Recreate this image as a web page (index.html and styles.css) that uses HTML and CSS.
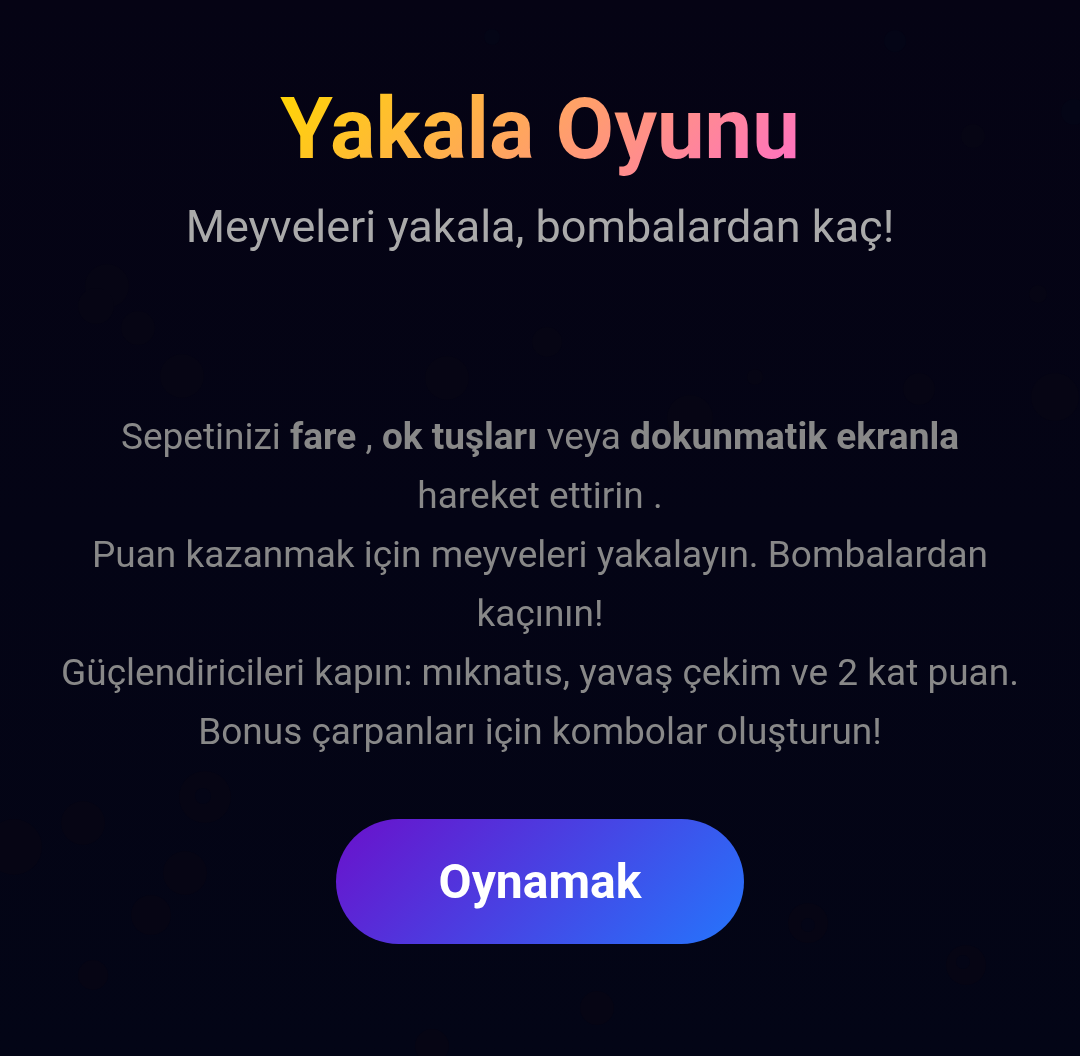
FILE: index.html
```html
<!DOCTYPE html>
<html lang="tr">
<head>
    <meta charset="UTF-8">
    <meta name="viewport" content="width=device-width, initial-scale=1.0">
    <title>Yakala Oyunu</title>
    <link rel="stylesheet" href="styles.css">
</head>
<body>
    <svg class="particles" viewBox="0 0 1080 1056" preserveAspectRatio="xMidYMid slice" aria-hidden="true">
        <g class="glow-dim">
            <circle cx="107" cy="286" r="22"/>
            <circle cx="96" cy="306" r="18"/>
            <circle cx="138" cy="328" r="17"/>
            <circle cx="182" cy="376" r="22"/>
            <circle cx="447" cy="378" r="22"/>
            <circle cx="547" cy="342" r="15"/>
            <circle cx="690" cy="418" r="23"/>
            <circle cx="755" cy="377" r="8"/>
            <circle cx="973" cy="136" r="12"/>
            <circle cx="919" cy="389" r="16"/>
            <circle cx="1055" cy="397" r="24"/>
            <circle cx="1038" cy="294" r="9"/>
        </g>
        <g class="glow-red">
            <circle cx="14" cy="847" r="28"/>
            <circle cx="83" cy="823" r="22"/>
            <circle cx="205" cy="797" r="26"/>
            <circle cx="185" cy="873" r="22"/>
            <circle cx="151" cy="915" r="20"/>
            <circle cx="93" cy="975" r="15"/>
            <circle cx="966" cy="965" r="20"/>
            <circle cx="808" cy="923" r="20"/>
            <circle cx="597" cy="1008" r="17"/>
            <circle cx="432" cy="1046" r="17"/>
        </g>
        <g class="glow-blue">
            <circle cx="203" cy="796" r="8"/>
            <circle cx="808" cy="925" r="7"/>
            <circle cx="963" cy="962" r="7"/>
            <circle cx="492" cy="37" r="8"/>
            <circle cx="895" cy="41" r="11"/>
            <circle cx="1074" cy="112" r="13"/>
        </g>
    </svg>
    <main class="start-screen">
        <h1 class="title">Yakala Oyunu</h1>
        <p class="subtitle">Meyveleri yakala, bombalardan kaç!</p>
        <p class="instructions">
            Sepetinizi <b>fare</b> , <b>ok tuşları</b> veya <b>dokunmatik ekranla</b> hareket ettirin .<br>
            Puan kazanmak için meyveleri yakalayın. Bombalardan kaçının!<br>
            Güçlendiricileri kapın: mıknatıs, yavaş çekim ve 2 kat puan.<br>
            Bonus çarpanları için kombolar oluşturun!
        </p>
        <button class="play-button" type="button">Oynamak</button>
    </main>
</body>
</html>
```
FILE: styles.css
```css
* {
    box-sizing: border-box;
}

body {
    margin: 0;
    min-height: 100vh;
    font-family: Roboto, sans-serif;
    background: linear-gradient(180deg, #050314, #030516);
    color: #fff;
}

.particles {
    position: fixed;
    inset: 0;
    z-index: -1;
    width: 100%;
    height: 100%;
}

.glow-dim {
    fill: #060514;
}

.glow-red {
    fill: #060514;
}

.glow-blue {
    fill: #040516;
}

.start-screen {
    display: flex;
    flex-direction: column;
    align-items: center;
    padding: 79px 60px;
    text-align: center;
}

.title {
    margin: 0 0 23px;
    font-size: 85px;
    line-height: 100px;
    font-weight: 700;
    background: linear-gradient(135deg, #ffd700, #ff6ec7);
    -webkit-background-clip: text;
    background-clip: text;
    color: transparent;
}

.subtitle {
    margin: 0 0 155px;
    font-size: 45px;
    line-height: 50px;
    color: #aaa;
}

.instructions {
    max-width: 960px;
    margin: 0 0 58px;
    font-size: 37px;
    line-height: 59px;
    color: #888;
}

.play-button {
    padding: 34px 103px;
    font-family: inherit;
    font-size: 48px;
    line-height: 57px;
    font-weight: 700;
    color: #fff;
    background: linear-gradient(135deg, #6a11cb, #2575fc);
    border: none;
    border-radius: 64px;
    cursor: pointer;
}
```
